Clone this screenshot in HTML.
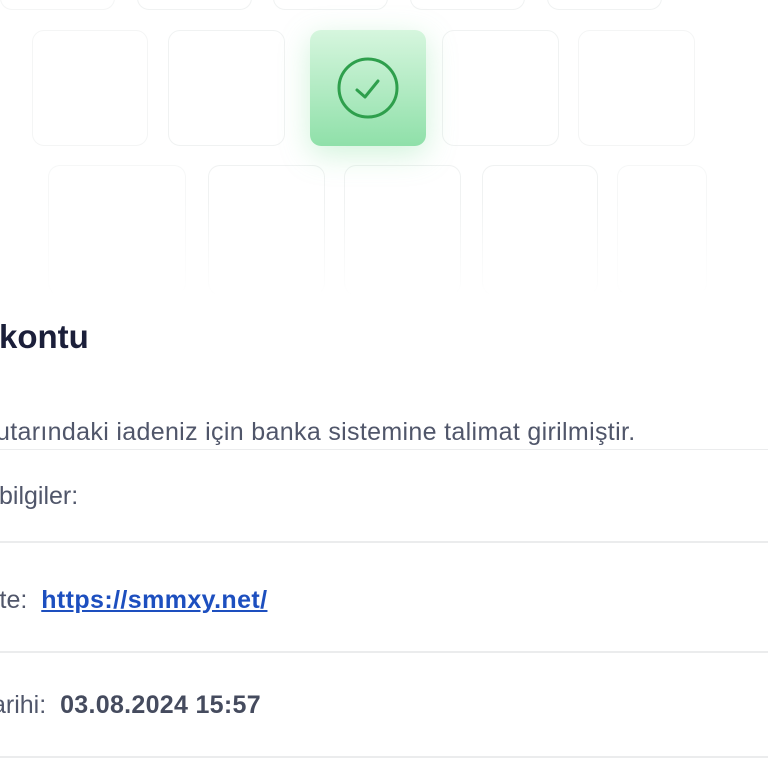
<!DOCTYPE html>
<html><head><meta charset="utf-8"><style>
html,body{margin:0;padding:0;width:768px;height:768px;overflow:hidden;background:#fff;font-family:"Liberation Sans",Arial,sans-serif;position:relative}
.t{position:absolute;border:1.5px solid #f0f2f2;border-radius:12px;box-sizing:border-box;background:#fff}
.g{position:absolute;left:310px;top:30px;width:116px;height:116px;border-radius:11px;background:linear-gradient(#d6f6de,#8fe0a9);box-shadow:0 8px 30px rgba(120,220,150,.35)}
.x{position:absolute;white-space:nowrap;line-height:1}
.hr{position:absolute;left:0;width:768px;height:2px;background:#ebeced}
</style></head><body>
<div class="t" style="left:0;top:-30px;width:115px;height:40px;border-color:#f4f5f5"></div>
<div class="t" style="left:137px;top:-30px;width:115px;height:40px"></div>
<div class="t" style="left:273px;top:-30px;width:115px;height:40px"></div>
<div class="t" style="left:410px;top:-30px;width:115px;height:40px"></div>
<div class="t" style="left:547px;top:-30px;width:115px;height:40px"></div>

<div class="t" style="left:32px;top:30px;width:116px;height:116px;border-color:#f4f5f5"></div>
<div class="t" style="left:168px;top:30px;width:117px;height:116px"></div>
<div class="t" style="left:442px;top:30px;width:117px;height:116px"></div>
<div class="t" style="left:578px;top:30px;width:117px;height:116px;border-color:#f4f5f5"></div>

<div class="t" style="left:48px;top:165px;width:138px;height:130px;border-color:#f6f7f7;border-bottom:none"></div>
<div class="t" style="left:208px;top:165px;width:117px;height:130px;border-bottom:none"></div>
<div class="t" style="left:344px;top:165px;width:117px;height:130px;border-bottom:none"></div>
<div class="t" style="left:482px;top:165px;width:116px;height:130px;border-bottom:none"></div>
<div class="t" style="left:617px;top:165px;width:90px;height:130px;border-color:#f6f7f7;border-bottom:none"></div>
<div style="position:absolute;left:0;top:200px;width:768px;height:100px;background:linear-gradient(rgba(255,255,255,0),#fff)"></div>

<div class="g"></div>
<svg style="position:absolute;left:310px;top:30px" width="116" height="116" viewBox="0 0 116 116">
<circle cx="58" cy="58" r="29" fill="none" stroke="#2e9f4c" stroke-width="3"/>
<path d="M47 60 L55 67 L68 51" fill="none" stroke="#2e9f4c" stroke-width="3" stroke-linecap="round" stroke-linejoin="round"/>
</svg>

<div class="x" style="left:-1px;top:320px;font-size:33px;font-weight:bold;color:#1b1f3a">kontu</div>
<div class="x" style="left:-4px;top:420px;font-size:25px;color:#50566a;letter-spacing:0.33px">utarındaki iadeniz için banka sistemine talimat girilmiştir.</div>
<div class="hr" style="top:449px;height:1px"></div>
<div class="x" style="left:-1px;top:484px;font-size:25px;color:#50566a">bilgiler:</div>
<div class="hr" style="top:541px"></div>
<div class="x" style="left:-6px;top:588px;font-size:25px;color:#50566a">ite:&nbsp;&nbsp;<b style="color:#1d4fbf;text-decoration:underline;letter-spacing:0.4px">https://smmxy.net/</b></div>
<div class="hr" style="top:651px"></div>
<div class="x" style="left:-8px;top:693px;font-size:25px;color:#50566a">arihi:&nbsp; <b style="color:#454b5e;letter-spacing:0.3px">03.08.2024 15:57</b></div>
<div class="hr" style="top:756px"></div>
</body></html>
